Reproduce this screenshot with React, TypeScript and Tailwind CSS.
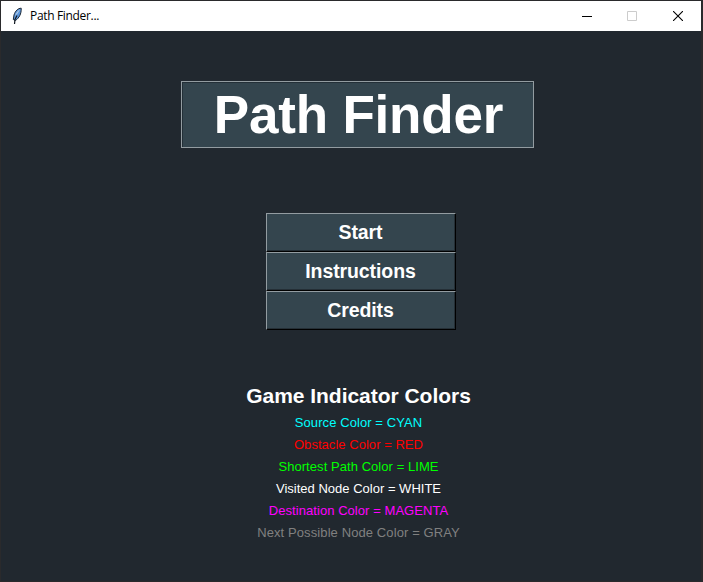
const indicators = [
  { text: 'Source Color = CYAN', style: 'text-[#00ffff] tracking-[0.08px]' },
  { text: 'Obstacle Color = RED', style: 'text-[#ff0000] tracking-[0.04px]' },
  { text: 'Shortest Path Color = LIME', style: 'text-[#00ff00] tracking-[0.06px]' },
  { text: 'Visited Node Color = WHITE', style: 'text-white tracking-[0.01px]' },
  { text: 'Destination Color = MAGENTA', style: 'text-[#ff00ff] tracking-[0.06px]' },
  { text: 'Next Possible Node Color = GRAY', style: 'text-[#808080] tracking-[0.1px]' },
];

const menu = ['Start', 'Instructions', 'Credits'];

function Feather() {
  return (
    <svg width="12" height="18" viewBox="0 0 12 18" className="shrink-0">
      <path d="M10.200 1.200C7 1.200 4.200 4 3 8L2.300 12.500L4.500 13.500C8 11 10.500 7 10.200 1.200Z" fill="#5c96dc" stroke="#1b2633" strokeWidth="1" />
      <path d="M9 2.500C7 3.500 5 6 4 9L6.500 6.500Z" fill="#b5cce2" />
      <path d="M6 8.500L4 12.500L3.500 17" fill="none" stroke="#101820" strokeWidth="1.2" />
    </svg>
  );
}

function TitleBar() {
  return (
    <header className="flex h-[30px] items-center bg-white pl-[10px] text-black">
      <Feather />
      <span className="ml-[7px] font-['Open_Sans','Noto_Sans',sans-serif] text-[12px] leading-4 tracking-[-0.33px]">
        Path Finder...
      </span>
      <div className="ml-auto flex h-full">
        <div className="flex w-[45px] items-center justify-center">
          <svg width="10" height="10" viewBox="0 0 10 10" shapeRendering="crispEdges">
            <path d="M0 5H10V6H0Z" fill="#000" />
          </svg>
        </div>
        <div className="flex w-[45px] items-center justify-center">
          <svg width="10" height="10" viewBox="0 0 10 10">
            <path d="M.5 .5H9.500V9.500H.5Z" fill="none" stroke="#ccc" />
          </svg>
        </div>
        <div className="flex w-[47px] items-center justify-center">
          <svg width="10" height="10" viewBox="0 0 10 10">
            <path d="M0 0L10 10M10 0L0 10" fill="none" stroke="#000" strokeWidth="1.1" />
          </svg>
        </div>
      </div>
    </header>
  );
}

export default function App() {
  return (
    <div className="h-[582px] w-[703px] bg-[#2a2a2c] pt-px pr-[2px] pb-px pl-px font-['Liberation_Sans',Arial,sans-serif]">
      <div className="flex h-full flex-col bg-[#21282f]">
        <TitleBar />
        <main className="flex flex-col items-center pt-[50px]">
          <div className="ml-[13px] border border-[#939ca1]">
            <h1 className="flex h-[65px] w-[351px] items-center justify-center border-t border-l border-[#232f37] bg-[#34454e] pl-px text-[53px] leading-[60px] font-bold tracking-[-0.2px] text-white">
              Path Finder
            </h1>
          </div>
          <nav className="mt-[65px] ml-[20px] flex w-[190px] flex-col">
            {menu.map((label) => (
              <button key={label} className="h-[39px] border-t border-r border-b border-l border-t-[#939ca1] border-r-black border-b-black border-l-[#939ca1]">
                <span className="flex h-full items-center justify-center border-r border-b border-[#252f36] bg-[#34454e] text-[19.5px] leading-6 font-bold tracking-[-0.1px] text-white">
                  {label}
                </span>
              </button>
            ))}
          </nav>
          <section className="mt-[53px] ml-[15px] text-center">
            <h2 className="text-[21px] leading-[25px] font-bold tracking-[-0.03px] text-white">Game Indicator Colors</h2>
            <ul className="mt-[4px]">
              {indicators.map(({ text, style }) => (
                <li key={text} className={`text-[13px] leading-[22px] ${style}`}>{text}</li>
              ))}
            </ul>
          </section>
        </main>
      </div>
    </div>
  );
}
